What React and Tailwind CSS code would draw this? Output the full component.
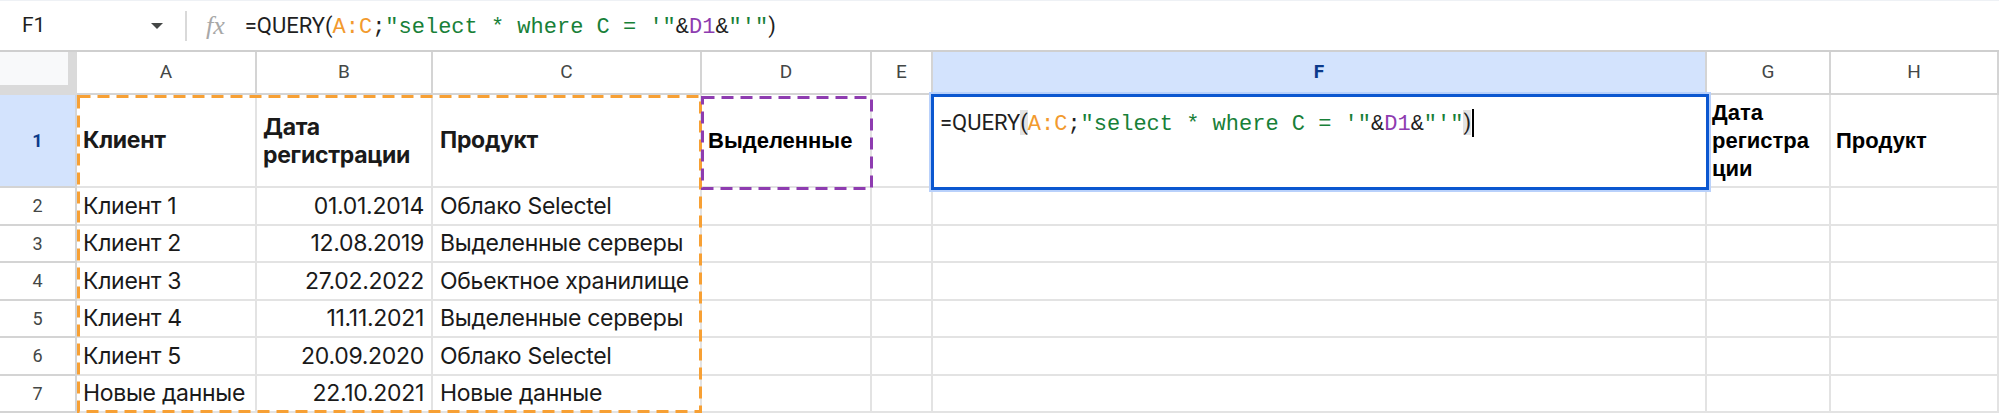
import React from "react";

const COLS = ["A", "B", "C", "D", "E", "F", "G", "H"];

const DATA = [
  ["Клиент 1", "01.01.2014", "Облако Selectel"],
  ["Клиент 2", "12.08.2019", "Выделенные серверы"],
  ["Клиент 3", "27.02.2022", "Обьектное хранилище"],
  ["Клиент 4", "11.11.2021", "Выделенные серверы"],
  ["Клиент 5", "20.09.2020", "Облако Selectel"],
  ["Новые данные", "22.10.2021", "Новые данные"],
];

function Formula({ editor }) {
  const mono = "font-['Liberation_Mono','DejaVu_Sans_Mono',monospace]";
  return (
    <span className="whitespace-pre">
      <span className="font-['Roboto',sans-serif] text-[#1f1f1f]">=QUERY</span>
      <span className={`font-['Roboto',sans-serif] text-[#1f1f1f] ${editor ? "bg-[#e3e3e3]" : ""}`}>(</span>
      <span className={`${mono} text-[#f29a2e]`}>A:C</span>
      <span className={`${mono} text-[#1f1f1f]`}>;</span>
      <span className={`${mono} text-[#188038]`}>"select * where C = '"</span>
      <span className={`${mono} text-[#1f1f1f]`}>&amp;</span>
      <span className={`${mono} text-[#8e3cb0]`}>D1</span>
      <span className={`${mono} text-[#1f1f1f]`}>&amp;</span>
      <span className={`${mono} text-[#188038]`}>"'"</span>
      <span className={`font-['Roboto',sans-serif] text-[#1f1f1f] ${editor ? "bg-[#e3e3e3]" : ""}`}>)</span>
    </span>
  );
}

export default function App() {
  const hdr =
    "border-r-2 border-b-2 border-[#d4d4d4] flex items-center justify-center text-[19px] text-[#444746] font-['Roboto',sans-serif]";
  const rowNum =
    "border-r-2 border-b-2 border-[#d4d4d4] flex items-center justify-center text-[18px] text-[#444746] font-['Roboto',sans-serif]";
  const cell = "border-r-2 border-b-2 border-[#e3e3e3] flex items-center overflow-hidden";
  const inter = "font-['Inter',sans-serif] text-[23px] tracking-[-0.3px] text-[#1a1a1a]";
  const arialB = "font-['Liberation_Sans',Arial,sans-serif] font-bold text-[22px] text-black";

  return (
    <div className="w-[1999px] h-[415px] bg-white overflow-hidden">
      {/* Formula bar */}
      <div className="h-[52px] flex items-center border-t border-[#eef1f5] border-b-2 border-b-[#cfcfcf]">
        <div className="w-[185px] flex items-center pl-[22px] pr-[22px] h-full">
          <span className="font-['Roboto',sans-serif] text-[21px] text-[#1f1f1f] flex-1">F1</span>
          <span className="w-0 h-0 border-l-[6px] border-r-[6px] border-t-[6px] border-l-transparent border-r-transparent border-t-[#444746]" />
        </div>
        <div className="w-[2px] h-[30px] bg-[#d9d9d9]" />
        <span className="ml-[19px] font-['Liberation_Serif',serif] italic text-[26px] text-[#a8a8a8] leading-none">fx</span>
        <div className="ml-[20px] text-[22px] leading-[28px] pt-[1px]">
          <Formula />
        </div>
      </div>

      {/* Grid */}
      <div className="relative">
        <div className="grid grid-cols-[77px_180px_176px_269px_170px_61px_774px_124px_168px] grid-rows-[43px_93px_repeat(6,37.5px)]">
          {/* corner */}
          <div className="bg-[#f8f9fa] border-r-[9px] border-b-[10px] border-[#dadada]" />
          {COLS.map((c) =>
            c === "F" ? (
              <div
                key={c}
                className="border-r-2 border-b-2 border-[#d4d4d4] bg-[#d3e3fd] flex items-center justify-center text-[19px] font-bold text-[#0b3a8a] font-['Roboto',sans-serif]"
              >
                {c}
              </div>
            ) : (
              <div key={c} className={hdr}>
                {c}
              </div>
            )
          )}

          {/* Row 1 */}
          <div className="border-r-2 border-b-2 border-[#d4d4d4] bg-[#d3e3fd] flex items-center justify-center text-[18px] font-bold text-[#0b3a8a] font-['Roboto',sans-serif]">
            1
          </div>
          <div className={`${cell} pl-[6px]`}>
            <span className={`${inter} font-bold`}>Клиент</span>
          </div>
          <div className={`${cell} pl-[6px]`}>
            <span className={`${inter} font-bold leading-[28px]`}>
              Дата
              <br />
              регистрации
            </span>
          </div>
          <div className={`${cell} pl-[7px]`}>
            <span className={`${inter} font-bold`}>Продукт</span>
          </div>
          <div className={`${cell} pl-[6px]`}>
            <span className={arialB}>Выделенные</span>
          </div>
          <div className={cell} />
          <div className={cell} />
          <div className={`${cell} pl-[5px]`}>
            <span className={`${arialB} leading-[28px]`}>
              Дата
              <br />
              регистра
              <br />
              ции
            </span>
          </div>
          <div className={`${cell} pl-[5px]`}>
            <span className={arialB}>Продукт</span>
          </div>

          {DATA.map((r, i) => (
            <React.Fragment key={i}>
              <div className={rowNum}>{i + 2}</div>
              <div className={`${cell} pl-[6px]`}>
                <span className={`${inter} whitespace-nowrap`}>{r[0]}</span>
              </div>
              <div className={`${cell} justify-end pr-[7px]`}>
                <span className={`${inter} whitespace-nowrap`}>{r[1]}</span>
              </div>
              <div className={`${cell} pl-[7px]`}>
                <span className={`${inter} whitespace-nowrap`}>{r[2]}</span>
              </div>
              <div className={cell} />
              <div className={cell} />
              <div className={cell} />
              <div className={cell} />
              <div className={cell} />
            </React.Fragment>
          ))}
        </div>

        {/* Orange dashed range A1:C7 */}
        <div className="absolute left-[77px] top-[43px] w-[625px] h-[318px] pointer-events-none">
          <svg width="625" height="318" className="block">
            <rect x="1.5" y="1.5" width="622" height="315" fill="none" stroke="#f7a034" strokeWidth="3" strokeDasharray="12 7" />
          </svg>
        </div>

        {/* Purple dashed D1 */}
        <div className="absolute left-[701px] top-[44px] w-[172px] h-[94px] pointer-events-none">
          <svg width="172" height="94" className="block">
            <rect x="1.5" y="1.5" width="169" height="91" fill="none" stroke="#8e3cb0" strokeWidth="3" strokeDasharray="12 7" />
          </svg>
        </div>

        {/* Active cell editor F1 */}
        <div className="absolute left-[929px] top-[40px] w-[782px] h-[100px] border-2 border-[#b9d1fb]">
          <div className="w-full h-full border-[3px] border-[#0b57d0] bg-white pl-[6px] pt-[10px]">
            <div className="text-[22px] leading-[28px] flex items-center">
              <Formula editor />
              <span className="inline-block w-[2px] h-[28px] bg-black ml-[1px]" />
            </div>
          </div>
        </div>
      </div>
    </div>
  );
}
